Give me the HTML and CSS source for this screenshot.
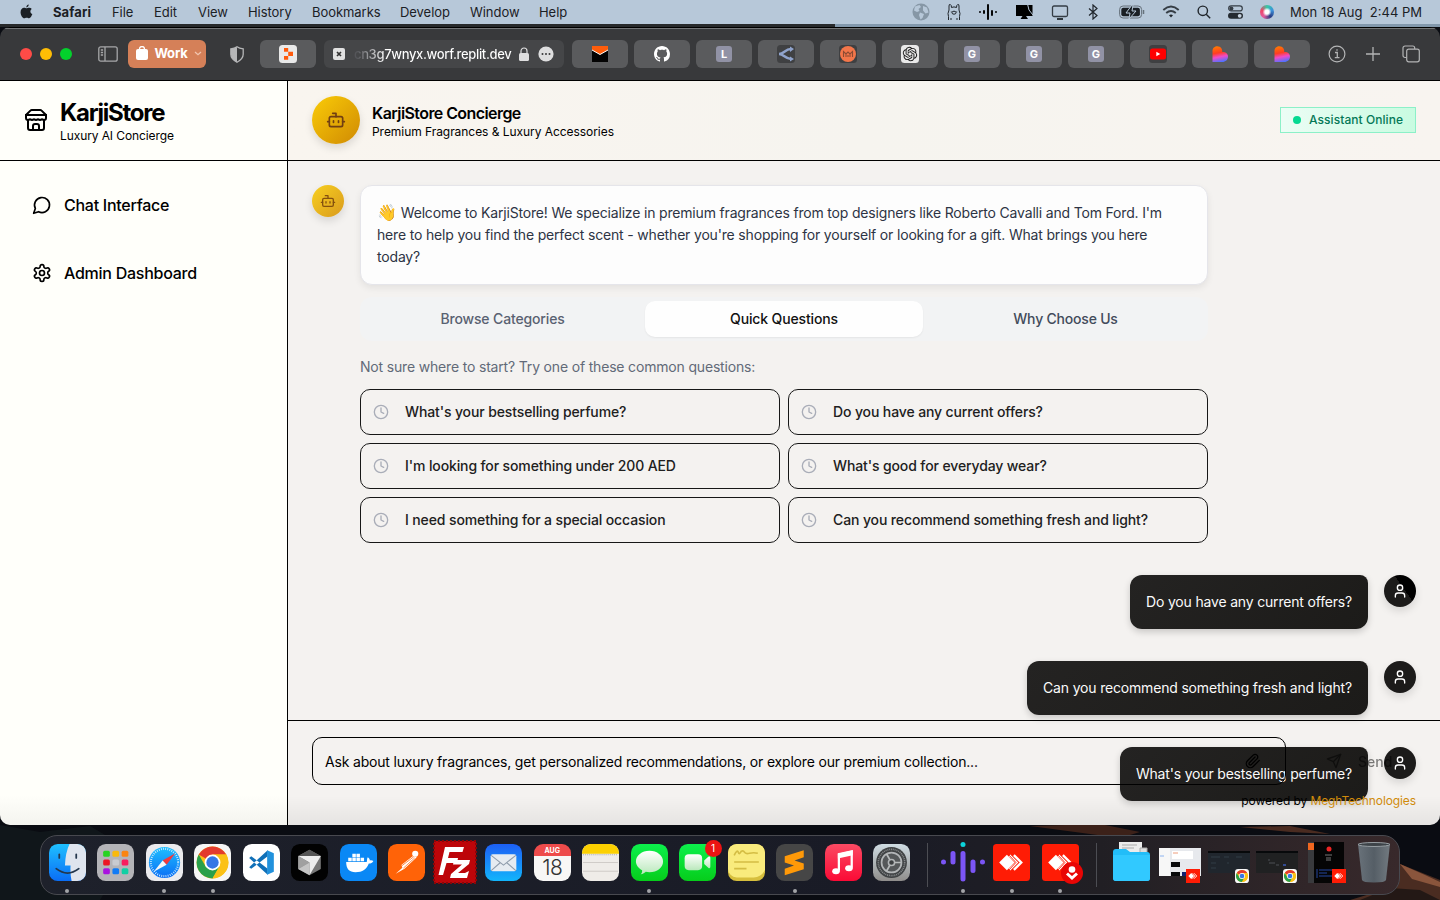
FILE: index.html
```html
<!DOCTYPE html>
<html lang="en">
<head>
<meta charset="utf-8">
<title>KarjiStore Concierge</title>
<link rel="stylesheet" href="styles.css">
</head>
<body>
<svg class="defs" width="0" height="0">
  <defs>
    <linearGradient id="gMail" x1="0" y1="0" x2="0" y2="1"><stop offset="0" stop-color="#1d5ff5"/><stop offset="1" stop-color="#12b5fb"/></linearGradient>
    <linearGradient id="gGreen" x1="0" y1="0" x2="0" y2="1"><stop offset="0" stop-color="#0cf04c"/><stop offset="1" stop-color="#06cd1b"/></linearGradient>
    <linearGradient id="gWhite" x1="0" y1="0" x2="0" y2="1"><stop offset="0" stop-color="#fff"/><stop offset="1" stop-color="#b9e8bb"/></linearGradient>
    <linearGradient id="gBlue" x1="0" y1="0" x2="0" y2="1"><stop offset="0" stop-color="#1fc0ff"/><stop offset="1" stop-color="#0a6df5"/></linearGradient>
    <linearGradient id="gMusic" x1="0" y1="0" x2="0" y2="1"><stop offset="0" stop-color="#fb4a63"/><stop offset="1" stop-color="#fb0a35"/></linearGradient>
    <linearGradient id="gSet" x1="0" y1="0" x2="0" y2="1"><stop offset="0" stop-color="#cfdce3"/><stop offset="1" stop-color="#8f8d8b"/></linearGradient>
    <linearGradient id="gHeart" x1=".3" y1="0" x2=".5" y2="1"><stop offset="0" stop-color="#ff7a00"/><stop offset=".42" stop-color="#ff3d22"/><stop offset=".68" stop-color="#f04bc8"/><stop offset="1" stop-color="#4f72ff"/></linearGradient>
    <linearGradient id="gBin" x1="0" y1="0" x2="1" y2="0"><stop offset="0" stop-color="#69727a"/><stop offset=".5" stop-color="#555e66"/><stop offset="1" stop-color="#727a80"/></linearGradient>
    <symbol id="bot" viewBox="0 0 24 24"><path d="M12 8V4H8"/><rect width="16" height="12" x="4" y="8" rx="2"/><path d="M2 14h2M20 14h2M15 13v2M9 13v2"/></symbol>
    <symbol id="clock" viewBox="0 0 24 24"><circle cx="12" cy="12" r="10"/><path d="M12 6v6l4 2"/></symbol>
    <symbol id="user" viewBox="0 0 24 24"><path d="M19 21v-2a4 4 0 0 0-4-4H9a4 4 0 0 0-4 4v2"/><circle cx="12" cy="7" r="4"/></symbol>
    <symbol id="heart" viewBox="0 0 18 18"><path d="M1.500 6C1.500.4 8.500-.2 10.500 3.500c.8 1.500.8 2.300.7 3.500 3.400-.3 5.800 1.700 5.800 4.500 0 3.200-2.400 5.500-5.800 5.500H1.500Z" fill="url(#gHeart)"/></symbol>
    <symbol id="chrome" viewBox="0 0 36 36"><circle cx="18" cy="18" r="15.500" fill="#fbc116"/><path d="M18 18 4.580 10.250A15.500 15.500 0 0 1 31.420 10.250H18Z" fill="#e33b2e"/><path d="M4.580 10.250A15.500 15.500 0 0 0 18 33.500l6.700-11.600L18 18l-6.700 3.900Z" fill="#2aa04a"/><path d="M31.420 10.250H18l6.700 11.650L18 33.500a15.500 15.500 0 0 0 13.420-23.250Z" fill="#fbc116"/><circle cx="18" cy="18" r="7.700" fill="#fff"/><circle cx="18" cy="18" r="6" fill="#3577e5"/></symbol>
    <symbol id="anydesk" viewBox="0 0 36 36"><path d="m6 18 7.500-7.500L21 18l-7.500 7.500Z" fill="#fff"/><path d="m20.300 10.800 7.200 7.200-7.200 7.200M16 11l7 7-7 7" fill="none" stroke="#fff" stroke-width="2.300"/><path d="m14.800 10 7.500 8-7.500 8" fill="none" stroke="#ff1c05" stroke-width=".9"/></symbol>
  </defs>
</svg>

<svg class="wallpaper" viewBox="0 0 1440 80" preserveAspectRatio="none">
  <rect width="1440" height="80" fill="#0a0c12"/>
  <path d="M0 5 40 12 90 6 130 30 100 80H0Z" fill="#10161a"/>
  <path d="M1030 6 1100 4 1140 12 1120 18Z" fill="#3c2119"/>
  <path d="M1240 7 1290 6 1330 14 1290 12Z" fill="#4a2b20"/>
  <path d="M1400 44 1420 52 1440 60V80H1350L1390 68Z" fill="#4a2c21"/>
  <path d="M1400 44 1425 55 1440 62V67L1412 59Z" fill="#8a553c"/>
  <path d="M1390 68 1420 70 1440 80H1360Z" fill="#231815"/>
</svg>

<header class="menubar">
  <nav class="menus">
    <svg class="apple" viewBox="0 0 14 16"><path d="M9.400 0c.1 1.400-1.100 3-2.600 3.100C6.600 1.700 8 .2 9.400 0ZM7 4c.6 0 1.500-.8 3-.7 1.100.1 2 .5 2.700 1.400-2.200 1.400-1.900 4.500.6 5.500-.6 1.800-1.900 4.500-3.500 4.500-1 0-1.300-.6-2.600-.6-1.300 0-1.700.6-2.600.6C2.900 14.700.6 11.400.6 8.200.6 5.100 2.500 3.400 4.300 3.400 5.500 3.400 6.400 4 7 4Z"/></svg>
    <b class="m-safari">Safari</b><span class="m-file">File</span><span class="m-edit">Edit</span><span class="m-view">View</span><span class="m-hist">History</span><span class="m-book">Bookmarks</span><span class="m-dev">Develop</span><span class="m-win">Window</span><span>Help</span>
  </nav>
  <div class="status">
    <svg width="18" height="18" viewBox="0 0 18 18"><circle cx="9" cy="9" r="8.500" fill="#8697a6"/><path d="M3 3.500 7.500 2 9 4 6.500 6l1 2L5 9 2 7.500ZM8 9.500l4 1.500-1.500 4-2 1.500L7 12ZM11 3l4 1.500 1.500 5-3 1-2.500-3Z" fill="#b7c8d9"/></svg>
    <svg width="14" height="18" viewBox="0 0 14 18" fill="none" stroke="#20262c"><path d="M1.500 17v-3.500l-.5-3 1-3.500V3q0-2 1.300-1.500Q4.500 2 4.500 4.500 7 3.300 9.500 4.500q0-2.500 1.200-3Q12 1 12 3v4l1 3.500-.5 3V17M4 17v-2M10 17v-2M4.300 8.500v.8M9.700 8.500v.8"/><ellipse cx="7" cy="9.700" rx="2" ry="1.500"/></svg>
    <svg width="20" height="18" viewBox="0 0 20 18" stroke="#050607" stroke-width="2" stroke-linecap="round"><path d="M2 9h0M6 8v2M10 2v14M14 8v4M18 9h0"/></svg>
    <svg width="19" height="18" viewBox="0 0 19 18"><path d="M1 2h16.500v11H1ZM7.500 13h3.500l2 3H5.500Z"/><path d="m12.500 1 1.500 6 4 5" fill="none" stroke="#b7c8d9"/></svg>
    <svg class="gap-s" width="18" height="18" viewBox="0 0 18 18"><rect x="1.500" y="3" width="15" height="10.500" rx="1.500" fill="none" stroke="#353d45" stroke-width="1.300"/><path d="M6 16h6" stroke="#20262c" stroke-width="1.800"/></svg>
    <svg class="gap-m" width="10" height="16" viewBox="0 0 10 16" fill="none" stroke="#20262c" stroke-width="1.200"><path d="m1 4.500 8 7-4 3.500V1l4 3.500-8 7"/></svg>
    <svg width="26" height="14" viewBox="0 0 26 14"><rect x=".6" y="1" width="22" height="12" rx="3.500" fill="none" stroke="#66717b"/><rect x="2.300" y="2.700" width="18.600" height="8.600" rx="2" fill="#1a1f24"/><path d="M24.500 5v4" stroke="#66717b" stroke-width="1.500"/><path d="m13 0-6 8h4l-1 6 7-8h-4l1-6Z" fill="#1a1f24" stroke="#b7c8d9"/></svg>
    <svg width="18" height="14" viewBox="0 0 18 14" fill="none" stroke="#353d45" stroke-width="1.900"><path d="M1.300 5Q9-1.800 16.700 5M4.200 8Q9 4 13.800 8"/><path d="m9 12.500-2-2.300Q9 8.700 11 10.200Z" fill="#20262c" stroke="none"/></svg>
    <svg width="14" height="14" viewBox="0 0 14 14" fill="none" stroke="#20262c" stroke-width="1.400"><circle cx="5.800" cy="5.800" r="4.700"/><path d="m9.200 9.200 4 4"/></svg>
    <svg width="15" height="14" viewBox="0 0 15 14"><rect x=".7" y=".9" width="13.600" height="5" rx="2.500" fill="none" stroke="#353d45" stroke-width="1.200"/><circle cx="3.400" cy="3.400" r="2" fill="#353d45"/><rect y="7.800" width="15" height="6" rx="3" fill="#252b31"/><circle cx="11.700" cy="10.800" r="1.900" fill="#c6d3df"/></svg>
    <i class="siri"></i>
    <span class="date">Mon 18 Aug&nbsp; 2:44 PM</span>
  </div>
</header>

<div class="behind"></div>

<main class="window">
  <div class="toolbar">
    <div class="lights"><i></i><i></i><i></i></div>
    <svg class="side-ic" width="20" height="16" viewBox="0 0 20 16" fill="none" stroke="#a6a7a9" stroke-width="1.300"><rect x=".8" y=".8" width="18.400" height="14.400" rx="2"/><path d="M7 1v14M2.800 4h2.300M2.800 6.500h2.300M2.800 9h2.300"/></svg>
    <div class="profile">
      <svg width="12" height="14" viewBox="0 0 12 14"><rect y="3" width="12" height="11" rx="2" fill="#fff"/><path d="M3.500 5V3a2.500 2.500 0 0 1 5 0v2" fill="none" stroke="#fff" stroke-width="1.300"/></svg>
      <b>Work</b>
      <svg width="8" height="5" viewBox="0 0 8 5" fill="none" stroke="#f1c4ae" stroke-width="1.300"><path d="m1 1 3 2.700L7 1"/></svg>
    </div>
    <svg class="shield" width="14" height="17" viewBox="0 0 14 17"><path d="M7 .8C5 2.300 3 2.700.8 2.900v5.400c0 3.700 3 6.200 6.200 7.900 3.200-1.700 6.200-4.200 6.200-7.900V2.900C11 2.700 9 2.300 7 .8Z" fill="none" stroke="#b6b7b8" stroke-width="1.300"/><path d="M7 1C5 2.300 3 2.700 1 2.900v5.400c0 3.700 3 6.200 6 7.900Z" fill="#b6b7b8"/></svg>
    <div class="tab"><svg width="18" height="18" viewBox="0 0 18 18"><rect width="18" height="18" rx="3.500" fill="#e9e9e9"/><path d="M5 3h4.200v3.800H5ZM9.200 6.800h4.800v4.200H9.200ZM5 11h4.200v3.800H5Z" fill="#ff5a0c"/></svg></div>
    <div class="address">
      <svg width="12" height="12" viewBox="0 0 12 12"><rect width="12" height="12" rx="2" fill="#e1e1e1"/><path d="m4 4 4 4M8 4 4 8" stroke="#333" stroke-width="1.700"/></svg>
      <span class="url">cn3g7wnyx.worf.replit.dev</span>
      <svg class="lock" width="10" height="14" viewBox="0 0 10 14"><rect y="6" width="10" height="8" rx="1.500" fill="#dededf"/><path d="M2 6.500V4a3 3 0 0 1 6 0v2.500" fill="none" stroke="#dededf" stroke-width="1.200"/></svg>
      <svg width="16" height="16" viewBox="0 0 16 16"><circle cx="8" cy="8" r="7.600" fill="#dededf"/><path d="M4.500 8h0M8 8h0M11.500 8h0" stroke="#3a3a3b" stroke-width="2" stroke-linecap="round"/></svg>
    </div>
    <div class="tabs">
      <div class="tab"><svg width="16" height="16" viewBox="0 0 16 16"><path d="M0 0h16v16H0Z" fill="#030303"/><path d="M0 0h16v4L8 8.500 0 4Z" fill="#ff5d0b"/><path d="m0 4 8 4.500L16 4" fill="none" stroke="#fff"/></svg></div>
      <div class="tab"><svg width="16" height="16" viewBox="0 0 16 16"><path fill="#fff" d="M8 0C3.580 0 0 3.580 0 8c0 3.540 2.290 6.530 5.470 7.590.4.070.55-.17.55-.38 0-.19-.01-.82-.01-1.490-2.010.37-2.530-.49-2.690-.94-.09-.23-.48-.94-.82-1.130-.28-.15-.68-.52-.01-.53.63-.01 1.080.58 1.230.82.72 1.210 1.870.87 2.330.66.07-.52.28-.87.51-1.070-1.780-.2-3.640-.89-3.640-3.950 0-.87.31-1.590.82-2.150-.08-.2-.36-1.020.08-2.120 0 0 .67-.21 2.200.82.64-.18 1.320-.27 2-.27s1.360.09 2 .27c1.530-1.040 2.200-.82 2.200-.82.44 1.100.16 1.920.08 2.120.51.56.82 1.270.82 2.150 0 3.070-1.870 3.750-3.650 3.950.29.25.54.73.54 1.480 0 1.070-.01 1.930-.01 2.200 0 .21.15.46.55.38A8.010 8.010 0 0 0 16 8c0-4.420-3.580-8-8-8Z"/></svg></div>
      <div class="tab"><b class="letter">L</b></div>
      <div class="tab"><svg width="18" height="18" viewBox="0 0 18 18"><rect width="18" height="18" rx="3.500" fill="#3f4042"/><path d="M2 9C7 9 8 4 14 4M2 9c5 0 6 5 12 5" fill="none" stroke="#8fa3cc" stroke-width="2.500"/><path d="m13 1.500 4 2.500-4 3ZM13 11.500l4 2.500-4 2.500Z" fill="#8fa3cc"/></svg></div>
      <div class="tab"><svg width="18" height="18" viewBox="0 0 18 18"><rect width="18" height="18" rx="3.500" fill="#3f4042"/><circle cx="9" cy="9" r="8" fill="#f3764a"/><path d="M4.500 12V6.500L7 9l2-2 2 2 2.500-2.500V12M7 12V9.500M11 12V9.500M9 12v-2" fill="none" stroke="#8c4b33" stroke-width="1.100"/></svg></div>
      <div class="tab"><svg width="18" height="18" viewBox="-6 -6 36 36"><rect x="-6" y="-6" width="36" height="36" rx="7" fill="#e9e9e9"/><path transform="translate(-2.400 -2.400) scale(1.200)" fill="#1c1c1c" d="M22.2819 9.8211a5.9847 5.9847 0 0 0-.5157-4.9108 6.0462 6.0462 0 0 0-6.5098-2.9A6.0651 6.0651 0 0 0 4.9807 4.1818a5.9847 5.9847 0 0 0-3.9977 2.9 6.0462 6.0462 0 0 0 .7427 7.0966 5.98 5.98 0 0 0 .511 4.9107 6.051 6.051 0 0 0 6.5146 2.9001A5.9847 5.9847 0 0 0 13.2599 24a6.0557 6.0557 0 0 0 5.7718-4.2058 5.9894 5.9894 0 0 0 3.9977-2.9001 6.0557 6.0557 0 0 0-.7475-7.0729zm-9.022 12.6081a4.4755 4.4755 0 0 1-2.8764-1.0408l.1419-.0804 4.7783-2.7582a.7948.7948 0 0 0 .3927-.6813v-6.7369l2.02 1.1686a.071.071 0 0 1 .038.052v5.5826a4.504 4.504 0 0 1-4.4945 4.4944zm-9.6607-4.1254a4.4708 4.4708 0 0 1-.5346-3.0137l.142.0852 4.783 2.7582a.7712.7712 0 0 0 .7806 0l5.8428-3.3685v2.3324a.0804.0804 0 0 1-.0332.0615L9.74 19.9502a4.4992 4.4992 0 0 1-6.1408-1.6464zM2.3408 7.8956a4.485 4.485 0 0 1 2.3655-1.9728V11.6a.7664.7664 0 0 0 .3879.6765l5.8144 3.3543-2.0201 1.1685a.0757.0757 0 0 1-.071 0l-4.8303-2.7865A4.504 4.504 0 0 1 2.3408 7.872zm16.5963 3.8558L13.1038 8.364 15.1192 7.2a.0757.0757 0 0 1 .071 0l4.8303 2.7913a4.4944 4.4944 0 0 1-.6765 8.1042v-5.6772a.79.79 0 0 0-.407-.667zm2.0107-3.0231l-.142-.0852-4.7735-2.7818a.7759.7759 0 0 0-.7854 0L9.409 9.2297V6.8974a.0662.0662 0 0 1 .0284-.0615l4.8303-2.7866a4.4992 4.4992 0 0 1 6.6802 4.66zM8.3065 12.863l-2.02-1.1638a.0804.0804 0 0 1-.038-.0567V6.0742a4.4992 4.4992 0 0 1 7.3757-3.4537l-.142.0805L8.704 5.459a.7948.7948 0 0 0-.3927.6813zm1.0976-2.3654l2.602-1.4998 2.6069 1.4998v2.9994l-2.5974 1.4997-2.6067-1.4997Z"/></svg></div>
      <div class="tab"><b class="letter">G</b></div>
      <div class="tab"><b class="letter">G</b></div>
      <div class="tab"><b class="letter">G</b></div>
      <div class="tab"><svg width="18" height="18" viewBox="0 0 18 18"><rect width="18" height="18" rx="3.500" fill="#3f4042"/><rect x="1" y="3.500" width="16" height="11" rx="2.500" fill="#f00"/><path d="m7.300 6.800 4 2.200-4 2.200Z" fill="#fff"/></svg></div>
      <div class="tab"><svg width="18" height="18"><use href="#heart"/></svg></div>
      <div class="tab"><svg width="18" height="18"><use href="#heart"/></svg></div>
    </div>
    <div class="tools">
      <svg width="18" height="18" viewBox="0 0 18 18" fill="none" stroke="#b3b4b5" stroke-width="1.200"><circle cx="9" cy="9" r="7.900"/><path d="M7 7.500h2.300v5M6.800 12.700h4.700M9 4.200v1.600" stroke-width="1.300"/></svg>
      <svg width="14" height="14" viewBox="0 0 14 14" stroke="#b3b4b5" stroke-width="1.300"><path d="M7 0v14M0 7h14"/></svg>
      <svg width="18" height="18" viewBox="0 0 18 18" fill="none" stroke="#b3b4b5" stroke-width="1.200"><rect x="4.700" y="4.200" width="12.600" height="12.600" rx="2"/><path d="M4.500 12.500H3a2 2 0 0 1-2-2V3a2 2 0 0 1 2-2h7.700a2 2 0 0 1 2 2v1"/></svg>
    </div>
  </div>

  <div class="page">
    <aside class="sidebar">
      <div class="brand">
        <svg class="line" width="24" height="24" viewBox="0 0 24 24"><path d="m2 7 4.410-4.410A2 2 0 0 1 7.830 2h8.340a2 2 0 0 1 1.420.59L22 7"/><path d="M4 12v8a2 2 0 0 0 2 2h12a2 2 0 0 0 2-2v-8"/><path d="M15 22v-4a2 2 0 0 0-2-2h-2a2 2 0 0 0-2 2v4"/><path d="M2 7h20"/><path d="M22 7v3a2 2 0 0 1-2 2a2.700 2.700 0 0 1-1.590-.63.700.700 0 0 0-.82 0A2.700 2.700 0 0 1 16 12a2.700 2.700 0 0 1-1.590-.63.700.700 0 0 0-.82 0A2.700 2.700 0 0 1 12 12a2.700 2.700 0 0 1-1.590-.63.700.700 0 0 0-.82 0A2.700 2.700 0 0 1 8 12a2.700 2.700 0 0 1-1.590-.63.700.700 0 0 0-.82 0A2.700 2.700 0 0 1 4 12a2 2 0 0 1-2-2V7"/></svg>
        <div><h1>KarjiStore</h1><p>Luxury AI Concierge</p></div>
      </div>
      <nav class="nav">
        <a class="n-chat"><svg class="line" width="20" height="20" viewBox="0 0 24 24"><path d="M7.900 20A9 9 0 1 0 4 16.100L2 22Z"/></svg><span>Chat Interface</span></a>
        <a class="n-admin"><svg class="line" width="20" height="20" viewBox="0 0 24 24"><path d="M12.220 2h-.44a2 2 0 0 0-2 2v.18a2 2 0 0 1-1 1.730l-.43.25a2 2 0 0 1-2 0l-.15-.08a2 2 0 0 0-2.730.73l-.22.38a2 2 0 0 0 .73 2.730l.15.1a2 2 0 0 1 1 1.720v.51a2 2 0 0 1-1 1.740l-.15.09a2 2 0 0 0-.73 2.730l.22.38a2 2 0 0 0 2.730.73l.15-.08a2 2 0 0 1 2 0l.43.25a2 2 0 0 1 1 1.730V20a2 2 0 0 0 2 2h.44a2 2 0 0 0 2-2v-.18a2 2 0 0 1 1-1.730l.43-.25a2 2 0 0 1 2 0l.15.08a2 2 0 0 0 2.730-.73l.22-.39a2 2 0 0 0-.73-2.730l-.15-.08a2 2 0 0 1-1-1.740v-.5a2 2 0 0 1 1-1.740l.15-.09a2 2 0 0 0 .73-2.730l-.22-.38a2 2 0 0 0-2.730-.73l-.15.08a2 2 0 0 1-2 0l-.43-.25a2 2 0 0 1-1-1.730V4a2 2 0 0 0-2-2z"/><circle cx="12" cy="12" r="3"/></svg><span>Admin Dashboard</span></a>
      </nav>
    </aside>

    <section class="chat">
      <header class="chat-head">
        <div class="avatar big"><svg class="line" width="20" height="20"><use href="#bot"/></svg></div>
        <div class="who"><h2>KarjiStore Concierge</h2><p>Premium Fragrances &amp; Luxury Accessories</p></div>
        <div class="online"><i></i><span>Assistant Online</span></div>
      </header>

      <div class="thread">
        <div class="bot-row">
          <div class="avatar"><svg class="line" width="16" height="16"><use href="#bot"/></svg></div>
          <div class="bot-col">
            <div class="welcome">
              <div><span class="wave">👋</span> Welcome to KarjiStore! We specialize in premium fragrances from top designers like Roberto Cavalli and Tom Ford. I'm</div>
              <div>here to help you find the perfect scent - whether you're shopping for yourself or looking for a gift. What brings you here</div>
              <div>today?</div>
            </div>
            <div class="segments"><span class="s1">Browse Categories</span><span class="on">Quick Questions</span><span class="s3">Why Choose Us</span></div>
            <p class="hint">Not sure where to start? Try one of these common questions:</p>
            <div class="questions">
              <div class="q"><svg class="line" width="16" height="16"><use href="#clock"/></svg><span>What's your bestselling perfume?</span></div>
              <div class="q"><svg class="line" width="16" height="16"><use href="#clock"/></svg><span>Do you have any current offers?</span></div>
              <div class="q"><svg class="line" width="16" height="16"><use href="#clock"/></svg><span>I'm looking for something under 200 AED</span></div>
              <div class="q"><svg class="line" width="16" height="16"><use href="#clock"/></svg><span>What's good for everyday wear?</span></div>
              <div class="q"><svg class="line" width="16" height="16"><use href="#clock"/></svg><span>I need something for a special occasion</span></div>
              <div class="q"><svg class="line" width="16" height="16"><use href="#clock"/></svg><span>Can you recommend something fresh and light?</span></div>
            </div>
          </div>
        </div>
        <div class="user-row"><div class="bubble">Do you have any current offers?</div><div class="avatar me split"><svg class="line" width="16" height="16"><use href="#user"/></svg></div></div>
        <div class="user-row"><div class="bubble">Can you recommend something fresh and light?</div><div class="avatar me"><svg class="line" width="16" height="16"><use href="#user"/></svg></div></div>
        <div class="user-row"><div class="bubble">What's your bestselling perfume?</div><div class="avatar me"><svg class="line" width="16" height="16"><use href="#user"/></svg></div></div>
      </div>

      <footer class="composer">
        <div class="compose-row">
          <div class="field"><span>Ask about luxury fragrances, get personalized recommendations, or explore our premium collection...</span>
            <svg class="line" width="16" height="16" viewBox="0 0 24 24"><path d="m21.440 11.050-9.190 9.190a6 6 0 0 1-8.490-8.490l8.570-8.570A4 4 0 1 1 18 8.840l-8.590 8.570a2 2 0 0 1-2.830-2.830l8.490-8.480"/></svg>
          </div>
          <div class="send"><svg class="line" width="16" height="16" viewBox="0 0 24 24"><path d="m22 2-7 20-4-9-9-4Z"/><path d="M22 2 11 13"/></svg><span>Send</span></div>
        </div>
        <p class="powered">powered by <em>MeghTechnologies</em></p>
      </footer>
    </section>
  </div>
</main>

<footer class="dock">
  <div class="app run"><svg viewBox="0 0 36 36"><rect width="36" height="36" rx="8.500" fill="url(#gBlue)"/><path d="M20 0h7.500A8.500 8.500 0 0 1 36 8.500v19a8.500 8.500 0 0 1-8.500 8.500H22q-1.500-7-1-15h-5.500Q16 8 20 0Z" fill="#dfe5ee"/><path d="M10 10v3.500M26.500 10v3.500M7 24q11 8.500 22 0" fill="none" stroke="#24374d" stroke-width="1.700" stroke-linecap="round"/></svg></div>
  <div class="app"><svg viewBox="0 0 36 36"><rect width="36" height="36" rx="8.500" fill="#b4b4b8"/><g><rect x="6" y="6.500" width="6.500" height="6" rx="1.500" fill="#27d321"/><rect x="15" y="6.500" width="6.500" height="6" rx="1.500" fill="#f9b90c"/><rect x="24" y="6.500" width="6.500" height="6" rx="1.500" fill="#fa8410"/><rect x="6" y="15" width="6.500" height="6" rx="1.500" fill="#ec1524"/><rect x="15" y="15" width="6.500" height="6" rx="1.500" fill="#c9cbd0"/><rect x="24" y="15" width="6.500" height="6" rx="1.500" fill="#f81d5e"/><rect x="6" y="23.500" width="6.500" height="6" rx="1.500" fill="#a913df"/><rect x="15" y="23.500" width="6.500" height="6" rx="1.500" fill="#117bf5"/><rect x="24" y="23.500" width="6.500" height="6" rx="1.500" fill="#10cfa4"/></g></svg></div>
  <div class="app run"><svg viewBox="0 0 36 36"><rect width="36" height="36" rx="8.500" fill="#ebebee"/><circle cx="18" cy="18" r="15.200" fill="url(#gBlue)"/><circle cx="18" cy="18" r="13.300" fill="none" stroke="#d5efff" stroke-width="2" stroke-dasharray=".8 1.300"/><path d="m28.500 9-8.500 11.200-3.800-4.200Z" fill="#f2393e"/><path d="m7.500 27 8.700-11 3.800 4.200Z" fill="#f5f6f8"/></svg></div>
  <div class="app run"><svg viewBox="0 0 36 36"><rect width="36" height="36" rx="8.500" fill="#f6f6f6"/><use href="#chrome" width="36" height="36"/></svg></div>
  <div class="app"><svg viewBox="0 0 36 36"><rect width="36" height="36" rx="8.500" fill="#fff"/><path d="m6 13.500 2-1.700 16 12.400V30ZM6 22.500l2 1.700 16-12.400V6Z" fill="#1070b8"/><path d="M23.500 6v24L30 27V9Z" fill="#2191dc"/></svg></div>
  <div class="app"><svg viewBox="0 0 36 36"><rect width="36" height="36" rx="8.500" fill="#020202"/><path d="m18 5.500 11 6.200v12.600L18 30.500 7 24.300V11.700Z" fill="#777"/><path d="m18 5.500 11 6.200H7Z" fill="#555"/><path d="M7 11.700h22L18 30.500V18Z" fill="#ededed"/><path d="M7 11.700v12.600L18 18Z" fill="#a0a0a0"/><path d="M7 24.300 18 18v12.500Z" fill="#c5c5c5"/></svg></div>
  <div class="app"><svg viewBox="0 0 36 36"><rect width="36" height="36" rx="8.500" fill="#0a88f5"/><path d="M6 17.500h20c.5-1 0-3 1-4.500 1.500 1 2 2 2 3 1.500-.3 2.500 0 3.500.5-1 2-2.500 2.500-4.500 2.500-2 5.500-6 8.500-13 8.500C9 27.500 6 24 6 17.500Z" fill="#fff"/><path d="M8 13h3.400v3.400H8ZM12 13h3.400v3.400H12ZM16 13h3.400v3.400H16ZM20 13h3.400v3.400H20ZM12 9h3.400v3.400H12ZM16 9h3.400v3.400H16Z" fill="#fff" transform="translate(0 .4)"/></svg></div>
  <div class="app"><svg viewBox="0 0 36 36"><rect width="36" height="36" rx="8.500" fill="#ff6308"/><circle cx="26.500" cy="9.500" r="3" fill="#fff"/><path d="m24 12-11 8.500 1 2.500-6.500 6 8.500-5L28 13Z" fill="#fff"/><path d="m13 21.500 12-9M15 23.500 26 13.500" stroke="#ff6308" stroke-width=".7"/></svg></div>
  <div class="app"><svg class="wide" viewBox="0 0 44 44"><rect x="1" y="1" width="42" height="42" fill="#bd0509" stroke="#8c0507" stroke-width="2" stroke-dasharray="2 2"/><path d="M12 7h19l-1.500 5h-13l-1.500 6h10l-1 5H13.500L10 35H5.500ZM21 20h16l-1 4-11 9h7l4-2-2 7H17l1-4 11-9.500h-9Z" fill="#fff"/></svg></div>
  <div class="app"><svg viewBox="0 0 36 36"><rect width="36" height="36" rx="8.500" fill="url(#gMail)"/><rect x="5.500" y="10" width="25" height="16.500" rx="2" fill="#e6ebf1"/><path d="m6 11 12 9.500L30 11M6 26l9-8M30 26l-9-8" fill="none" stroke="#8e9bab"/></svg></div>
  <div class="app"><div class="cal"><b>AUG</b><span>18</span></div></div>
  <div class="app"><svg viewBox="0 0 36 36"><rect width="36" height="36" rx="8.500" fill="#efece8"/><path d="M0 9.500v-1A8.500 8.500 0 0 1 8.500 0h19A8.500 8.500 0 0 1 36 8.500v1Z" fill="#fcd000"/><path d="M1 18h34M1 26.500h34" stroke="#c9c5c1" stroke-width=".8"/><path d="M1 10.500h34" stroke="#aaa" stroke-dasharray="1 1"/></svg></div>
  <div class="app run"><svg viewBox="0 0 36 36"><rect width="36" height="36" rx="8.500" fill="url(#gGreen)"/><path d="M18 6.500c7.500 0 13.200 4.700 13.200 10.500S25.500 27.500 18 27.500c-1.300 0-2.500-.2-3.600-.5-1 .9-2.800 2.300-5 2.500 1.200-1.200 1.600-2.600 1.400-4-3.500-1.900-6-5-6-8.500C4.800 11.200 10.500 6.500 18 6.500Z" fill="url(#gWhite)"/></svg></div>
  <div class="app"><svg viewBox="0 0 36 36"><rect width="36" height="36" rx="8.500" fill="url(#gGreen)"/><rect x="5.500" y="10" width="17" height="15.500" rx="4" fill="url(#gWhite)"/><path d="m24.500 16 4-3.500c1-.8 2-.4 2 1v8.500c0 1.500-1 2-2 1l-4-3.500Z" fill="url(#gWhite)"/></svg><span class="badge">1</span></div>
  <div class="app"><svg viewBox="0 0 36 36"><rect width="36" height="36" rx="8.500" fill="#d7bf3d"/><path d="M8.500 0h19A8.500 8.500 0 0 1 36 8.500V25q-3 7-11 7.500H8.500A8.500 8.500 0 0 1 0 24V8.500A8.500 8.500 0 0 1 8.500 0Z" fill="#f9eb7d"/><path d="M6 11q3-6 4-3t3-1q2-1 3 1t5 1 8 0M6 17.500h24M6 24h12" fill="none" stroke="#d4bd44" stroke-width="1.600"/></svg></div>
  <div class="app run"><svg viewBox="0 0 36 36"><rect width="36" height="36" rx="8.500" fill="#464646"/><path d="m8.500 12 18.500-6v7l-9 3 9 3v5.500l-18.500 6V24l9-3-9-3Z" fill="#ff9908"/></svg></div>
  <div class="app"><svg viewBox="0 0 36 36"><rect width="36" height="36" rx="8.500" fill="url(#gMusic)"/><path d="M13.500 26V10l12.500-2.800V23" fill="none" stroke="#fff" stroke-width="2.200"/><path d="M12.500 9.500 27 6.200V11l-14.500 3.200Z" fill="#fff"/><ellipse cx="10.700" cy="26.500" rx="3.700" ry="2.900" fill="#fff"/><ellipse cx="23.300" cy="23.500" rx="3.700" ry="2.900" fill="#fff"/></svg></div>
  <div class="app"><svg viewBox="0 0 36 36"><rect width="36" height="36" rx="8.500" fill="url(#gSet)"/><circle cx="18" cy="18" r="15" fill="#3f4244"/><circle cx="18" cy="18" r="12.800" fill="none" stroke="#85888a" stroke-width="1.600" stroke-dasharray="1 .8"/><circle cx="18" cy="18" r="9.700" fill="#55585a" stroke="#b2b5b7" stroke-width="1.700"/><circle cx="18" cy="18" r="3" fill="#3c3f41" stroke="#b2b5b7" stroke-width="1.500"/><path d="M21 18h6.500M16.500 15.400l-3.300-5.700M16.500 20.600l-3.300 5.700" stroke="#b7babb" stroke-width="1.700"/></svg></div>
  <div class="sep"></div>
  <div class="app run"><svg class="wide" viewBox="0 0 44 44" stroke="#7b55f5" stroke-width="5" stroke-linecap="round"><path d="M2.500 22h0M12 13.500v8.500M22 13.500v25.500M32 22v8.500M41.500 22h0"/><path d="M22 4.500h0" stroke="#0cd3db"/></svg></div>
  <div class="app run"><svg viewBox="0 0 36 36"><rect width="36" height="36" rx="3.500" fill="#ff1c05"/><use href="#anydesk" width="36" height="36"/></svg></div>
  <div class="app run"><svg viewBox="0 0 36 36"><rect width="36" height="36" rx="3.500" fill="#ff1c05"/><use href="#anydesk" width="36" height="36"/></svg><svg class="over" viewBox="0 0 22 22"><circle cx="11" cy="11" r="11" fill="#e90605"/><circle cx="11" cy="7.500" r="3.300" fill="#fff"/><path d="m6 11.500 5 4.500 5-4.500" fill="none" stroke="#fff" stroke-width="3"/></svg></div>
  <div class="sep"></div>
  <div class="app"><svg class="wide" viewBox="0 0 44 44"><path d="M9 2h23v16H9Z" fill="#ececec"/><path d="M12 5h15M12 8h12M30 8h7v8h-7Z" stroke="#aaa" fill="#ddd"/><path d="M3 12q0-3 3-3h10l4 3h17q3 0 3 3v23q0 3-3 3H6q-3 0-3-3Z" fill="#22bdf8"/><path d="M3 15h37v23q0 3-3 3H6q-3 0-3-3Z" fill="#31c9ff"/></svg></div>
  <div class="app"><svg class="wide" viewBox="0 0 44 44"><path d="M1 8h42v28H1Z" fill="#e7e9ed"/><path d="M1 8h11v28H1Z" fill="#f7f7f7"/><path d="M14 11h21v8H14Z" fill="#fff"/><path d="M13 22h9v5h-9ZM13 32h9v4h-9Z" fill="#08090b"/><path d="M24 32h8v4h-8Z" fill="#12226f"/><path d="M15 13h5" stroke="#ee9d7d"/><path d="M2 16h4" stroke="#8db4f0"/></svg><svg class="mini" viewBox="0 0 36 36"><rect width="36" height="36" fill="#ff1c05"/><use href="#anydesk" width="36" height="36"/></svg></div>
  <div class="app"><svg class="wide" viewBox="0 0 44 44"><path d="M1 11h42v22H1Z" fill="#20262d"/><path d="M1 11h42v2H1Z" fill="#07090b"/><path d="M4 17h9M17 17h5M29 17h6M4 23h5M20 23h2M4 28h5" stroke="#303c47"/></svg><svg class="mini" viewBox="0 0 36 36"><rect width="36" height="36" rx="8" fill="#f8f8f8"/><use href="#chrome" width="36" height="36"/></svg></div>
  <div class="app"><svg class="wide" viewBox="0 0 44 44"><path d="M1 11h42v22H1Z" fill="#202122"/><path d="M1 11h42v2H1Z" fill="#07090b"/><path d="M13 20h2M14 23h6M21 25h3" stroke="#4c5054"/><path d="M28 25h3" stroke="#4777ff"/></svg><svg class="mini" viewBox="0 0 36 36"><rect width="36" height="36" rx="8" fill="#f8f8f8"/><use href="#chrome" width="36" height="36"/></svg></div>
  <div class="app"><svg class="wide" viewBox="0 0 44 44"><path d="M4 2h36v41H4Z" fill="#050505"/><path d="M4 2h6v41H4Z" fill="#393a3d"/><path d="M4 3h6v7H4Z" fill="#f06720"/><circle cx="25" cy="9" r="2.500" fill="#ed2424"/><path d="M21 15h7M22 18h5M22 20h5" stroke="#777"/><path d="M13 29v9M15 30h14M15 33h8M15 36h13" stroke="#2446a0"/></svg><svg class="mini" viewBox="0 0 36 36"><rect width="36" height="36" fill="#ff1c05"/><use href="#anydesk" width="36" height="36"/></svg></div>
  <div class="app"><svg class="wide" viewBox="0 0 44 44"><path d="M6 4h32l-4 36q-.5 2.500-12 2.500T10 40Z" fill="url(#gBin)"/><ellipse cx="22" cy="4.500" rx="16" ry="2" fill="#3d4348" stroke="#989fa4"/></svg></div>
</footer>
</body>
</html>
```

FILE: styles.css
```css
* { box-sizing: border-box; }
body {
  margin: 0;
  width: 1440px;
  height: 900px;
  overflow: hidden;
  position: relative;
  background: #0a0c12;
  font-family: Inter, "Liberation Sans", sans-serif;
  color: #000;
  display: flex;
  flex-direction: column;
}
h1, h2, p { margin: 0; }
svg { display: block; flex: none; }
.defs { position: absolute; }
.line { fill: none; stroke: currentColor; stroke-width: 2; stroke-linecap: round; stroke-linejoin: round; }
.wallpaper { position: absolute; left: 0; bottom: 0; width: 1440px; height: 80px; }

/* Menu bar */
.menubar {
  height: 24px;
  flex: none;
  background: #b7c8d9;
  display: flex;
  align-items: center;
  justify-content: space-between;
  padding: 0 18px 1px 20px;
  font-size: 13px;
  color: #1b2025;
  white-space: nowrap;
}
.menus { display: flex; align-items: center; letter-spacing: -.05px; }
.apple { width: 13px; height: 16px; margin-right: 20px; fill: #1b2025; }
.m-safari { width: 59px; letter-spacing: .1px; }
.m-file { width: 42px; }
.m-edit { width: 44px; }
.m-view { width: 50px; }
.m-hist { width: 64px; }
.m-book { width: 88px; }
.m-dev { width: 70px; }
.m-win { width: 69px; }
.status { display: flex; align-items: center; gap: 17px; }
.gap-s { margin-right: 2px; }
.gap-m { margin-right: 4px; }
.siri {
  width: 14px; height: 14px; border-radius: 50%; margin-right: -1px;
  background: radial-gradient(circle, #fff 0 20%, transparent 45%), conic-gradient(#35cba4, #3b91dc, #283c83, #e35b9c, #ee4366, #35cba4);
}
.behind { height: 3px; flex: none; width: 100%; background: linear-gradient(90deg, #27292b 835px, #8298ac 835px); }

/* Browser window */
.window {
  position: relative;
  height: 798px;
  flex: none;
  border-radius: 10px;
  overflow: hidden;
  display: flex;
  flex-direction: column;
  background: #38393b;
}
.toolbar {
  height: 54px;
  flex: none;
  display: flex;
  align-items: center;
  border-top: 1px solid #000;
  border-bottom: 1px solid #000;
  box-shadow: inset 0 1px #727476;
  padding: 0 0 0 20px;
}
.lights { display: flex; gap: 8px; margin-right: 26px; }
.lights i { width: 12px; height: 12px; border-radius: 50%; background: #ff4b47; }
.lights i:nth-child(2) { background: #ffbd05; }
.lights i:nth-child(3) { background: #03d12c; }
.profile {
  width: 78px; height: 28px; border-radius: 6px; margin: 0 24px 0 10px;
  background: #d58058; color: #fff; font-size: 13px; letter-spacing: -.2px;
  display: flex; align-items: center; padding: 0 4px 2px 8px; justify-content: space-between;
}
.shield { margin-right: 16px; }
.tab { width: 56px; height: 28px; border-radius: 6px; background: #5a5b5d; display: grid; place-items: center; flex: none; }
.address {
  width: 240px; height: 28px; border-radius: 6px; background: #454648; margin: 0 8px;
  display: flex; align-items: center; padding: 0 10px 0 9px; color: #fff;
}
.url {
  width: 159px; margin: 0 6px 0 9px; font-size: 13px; font-weight: 500; letter-spacing: -.35px; white-space: nowrap;
  background: linear-gradient(90deg, #55565a 3px, #fff 32px); -webkit-background-clip: text; background-clip: text; color: transparent;
}
.lock { margin-right: 9px; }
.tabs { display: flex; gap: 6px; }
.letter { width: 16px; height: 16px; border-radius: 3px; background: #9192a5; color: #fff; font-size: 11px; line-height: 17px; text-align: center; }
.tools { display: flex; align-items: center; gap: 20px; margin-left: 18px; }
.tools svg:last-child { margin-left: 2px; }

/* Page */
.page { flex: 1; display: flex; min-height: 0; }
.sidebar { width: 288px; flex: none; border-right: 1px solid #000; background: linear-gradient(#fffffa 96%, #f4f4ef); }
.brand { height: 80px; border-bottom: 1px solid #000; display: flex; align-items: center; gap: 12px; padding: 0 24px 1px; white-space: nowrap; }
.brand h1 { font-size: 24px; line-height: 30px; font-weight: 700; letter-spacing: -1.25px; }
.brand p { font-size: 12px; line-height: 16px; letter-spacing: -.1px; }
.brand > div { padding-top: 2px; }
.nav { padding: 10px 32px; }
.nav a { height: 68px; display: flex; align-items: center; gap: 12px; font-size: 16px; font-weight: 500; white-space: nowrap; letter-spacing: -.26px; }

.chat { flex: 1; display: flex; flex-direction: column; min-width: 0; background: #f4f2f0; }
.chat-head {
  height: 80px; flex: none; border-bottom: 1px solid #000; padding: 0 24px 1px;
  display: flex; align-items: center; gap: 12px; white-space: nowrap;
  background: linear-gradient(90deg, #f9f5ef, #f6f4ef 50%, #f8f4f0);
}
.avatar {
  width: 32px; height: 32px; border-radius: 50%; flex: none;
  display: grid; place-items: center; color: #85510e;
  background: linear-gradient(135deg, #f8d01f, #d99a1e);
  box-shadow: 0 4px 8px rgba(0,0,0,.12);
}
.avatar.big { width: 48px; height: 48px; color: #713f12; background: linear-gradient(135deg, #facc07, #d08a03); }
.avatar.me { background: #1c1b1a; color: #fff; }
.avatar.split { background: linear-gradient(55deg, #1c1b1a 60%, #000 60%); }
.who h2 { font-size: 16px; line-height: 20px; font-weight: 600; letter-spacing: -.58px; }
.who p { font-size: 12px; line-height: 16px; margin-top: 1px; letter-spacing: -.05px; }
.who { padding-top: 2px; }
.online {
  margin-left: auto; width: 136px; height: 26px; border: 1px solid #8cf0c8;
  background: linear-gradient(90deg, #ecfdf5, #c9fbe1); color: #047857;
  display: flex; align-items: center; padding: 0 0 1px 12px; gap: 8px; font-size: 12px; font-weight: 500; letter-spacing: .06px;
}
.online i { width: 8px; height: 8px; border-radius: 50%; background: #05d992; }

.thread { height: 559px; flex: none; padding: 24px; display: flex; flex-direction: column; gap: 32px; }
.bot-row { display: flex; gap: 16px; flex: none; }
.bot-col { width: 848px; flex: none; }
.welcome {
  height: 100px; border: 1px solid #e5e5ea; border-radius: 12px; background: #fdfdfd;
  padding: 16px; font-size: 14px; line-height: 22px; color: #2d3444; white-space: nowrap; letter-spacing: -.175px;
  box-shadow: 0 3px 7px rgba(0,0,0,.07);
}
.wave { display: inline-block; width: 20px; font-size: 16px; line-height: 16px; }
.segments {
  height: 44px; margin-top: 12px; padding: 4px; border-radius: 12px; background: #f2f3f4;
  display: grid; grid-template-columns: repeat(3, 1fr); font-size: 14px; font-weight: 500; color: #596171;
  text-align: center; line-height: 36px; letter-spacing: -.15px;
}
.segments .on { margin: 0 1px; background: #fefefe; border-radius: 10px; color: #111; box-shadow: 0 1px 2px rgba(0,0,0,.06); }
.segments .s1 { padding-right: 3px; }
.segments .s3 { padding-left: 3px; color: #424b5b; letter-spacing: -.2px; }
.hint { margin-top: 16px; font-size: 14px; line-height: 20px; color: #626a78; white-space: nowrap; letter-spacing: -.175px; }
.questions { margin-top: 12px; display: grid; grid-template-columns: 1fr 1fr; gap: 8px; }
.q { height: 46px; border: 1px solid #171717; border-radius: 10px; display: flex; align-items: center; gap: 16px; padding-left: 12px; font-size: 14px; font-weight: 500; color: #202020; white-space: nowrap; letter-spacing: -.12px; }
.q span { padding-bottom: 1px; }
.q svg { color: #a9adb8; }
.user-row { display: flex; justify-content: flex-end; gap: 16px; flex: none; }
.bubble {
  height: 54px; padding: 0 16px; border-radius: 12px 8px 12px 12px; line-height: 54px; font-size: 14px; color: #fafafa; letter-spacing: -.18px;
  white-space: nowrap; background: linear-gradient(135deg, #242322, #1c1b19); box-shadow: 0 3px 7px rgba(0,0,0,.18);
}

/* The composer is see-through, the thread runs on below it */
.composer {
  position: relative; flex: 1; border-top: 1px solid #000; padding: 16px 24px 0;
  background: linear-gradient(transparent 72%, rgba(0,0,0,.06));
}
.compose-row { display: flex; gap: 16px; }
.field { width: 974px; height: 48px; border: 1px solid #000; border-radius: 10px; display: flex; align-items: center; justify-content: space-between; padding: 0 24px 0 12px; font-size: 14px; white-space: nowrap; letter-spacing: -.18px; }
.send { flex: 1; display: flex; align-items: center; gap: 16px; padding-left: 24px; font-size: 14px; font-weight: 500; opacity: .5; }
.powered { font-size: 12px; line-height: 16px; margin-top: 8px; text-align: right; letter-spacing: -.1px; }
.powered em { font-style: normal; color: #d08b0b; }

/* Dock */
.dock {
  position: absolute; left: 40px; top: 835px; width: 1360px; height: 60px;
  border: 1px solid #48494f; border-radius: 17px; padding-left: 2px;
  background: linear-gradient(90deg, #1e212b, #191b26 60%, #211f24 78%, #38292b);
  display: flex;
}
.app { position: relative; width: 48.5px; height: 52px; flex: none; display: grid; place-items: center; }
.app > svg { width: 37px; height: 37px; }
.app > svg.wide { width: 44px; height: 44px; }
.run::after { content: ""; position: absolute; left: 22px; top: 53px; width: 4px; height: 4px; border-radius: 50%; background: #a3a4a8; }
.sep { width: 23px; flex: none; display: grid; place-items: center; }
.sep::before { content: ""; width: 1px; height: 44px; background: #4c4d53; }
.cal { width: 37px; height: 37px; border-radius: 9px; background: linear-gradient(#ee4b4b 12px, #f8f7f6 12px); text-align: center; color: #333; overflow: hidden; }
.cal b { display: block; height: 12px; font-size: 7px; line-height: 13px; color: #fff; }
.cal span { display: block; font-size: 21px; line-height: 24px; font-weight: 300; letter-spacing: -.5px; }
.badge { position: absolute; left: 31px; top: 4px; width: 17px; height: 17px; border-radius: 50%; background: #ec1313; color: #fff; font-size: 10px; line-height: 17px; text-align: center; }
.app > svg.over { position: absolute; left: 25px; top: 26px; width: 22px; height: 22px; }
.app > svg.mini { position: absolute; left: 30px; top: 33px; width: 14px; height: 14px; }
```
